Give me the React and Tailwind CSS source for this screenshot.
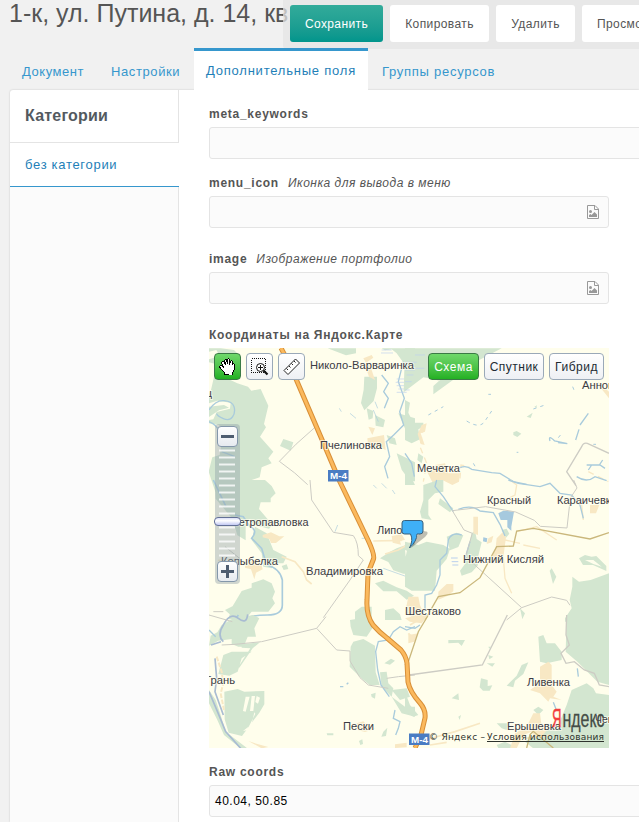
import React from 'react';

const WOOD = '#d3e6d0';
const SAND = '#f8e8c4';
const WATER = '#a9cbdc';
const BORDER = '#cdccc4';

function Label({ x, y, w, children }) {
  return (
    <text
      x={x}
      y={y}
      textLength={w}
      lengthAdjust="spacingAndGlyphs"
      fontSize="11"
      fill="#3b3b44"
      stroke="#fffff0"
      strokeWidth="2"
      strokeOpacity="0.7"
      paintOrder="stroke"
    >
      {children}
    </text>
  );
}

function RoadSign({ x, y }) {
  return (
    <g>
      <rect x={x} y={y} width="20.500" height="11.500" fill="#4a7cc3" />
      <text
        x={x + 2}
        y={y + 9.2}
        textLength="17"
        lengthAdjust="spacingAndGlyphs"
        fontSize="9.500"
        fontWeight="bold"
        fill="#fff"
      >
        М-4
      </text>
    </g>
  );
}

/* Tiles are drawn at triple density, each group covering one map sector. */
function MapCanvas() {
  return (
    <svg
      className="block h-[400px] w-[400px]"
      viewBox="209 348 400 400"
      fontFamily="'Liberation Sans', Arial, sans-serif"
    >
      <rect x="209" y="348" width="400" height="400" fill="#fffeec" />

      {/* north-west */}
      <g transform="translate(205 345) scale(.33333)">
        <path fill={WOOD} d="M12 10h35l40 5 20 20-45 12-30 10-20-5zM35 60l30 40 32 15 32 10 10 12 28-5 23 50-13 55 6 10-18 28 40 45-15 20 10 15-30 12-6 30-35 12-10 31-25 0-8-15-10 15-45 0-20-60 15-60-28-50-5-95 25-40z" />
        <path fill="#fffeec" d="M12 20l22-5 10 18-32 10zM12 235l30 5 12 30-10 60-32 10zM12 175l25-8 40 6-2 18-40 10-10 22-13 2z" />
        <path fill={WOOD} d="M12 185l45-5 15 8-30 8-30 20zM235 282l30 10-8 25-32-14zM368 10l85 0 0 15-30 6-20-8zM478 95l38 0 0 35-10 38-28 28-10-22 8-40zM485 190l20 8-2 22-12 4zM510 210l30 15-5 22-23-5zM580 205l50 15v45l-28-10zM545 270l25 10 5 20-22-5zM530 10l100 0 0 60-30-10-25-35-15-12-20 3zM575 325l25 12 30 15v57h-15l-25-35z" />
        <path fill={SAND} d="M475 40l25-10 5 8-22 15zM480 60l15 0 15 45-18-10zM487 280l50-10 5 45-20-10-32 5zM490 245l20 5-8 20z" />
        <path fill="none" stroke={WATER} strokeWidth="4" d="M12 195q20-30 45-28t30 18-4 30-28 6-20-15M12 230q25 10 30 30M530 90l20 25-14 25 14 20-12 30M595 50l-15 60 18 50-14 40 12 40-30 30-22 20 10 45-15 30 10 35M50 320l40 15" />
        <path fill="none" stroke="#bcd0ee" strokeWidth="2" d="M575 102h34M572 112h34M575 122h34M580 132h26M575 142h30M530 15h30M528 24h36M600 22h30" />
        <path fill="none" stroke={BORDER} strokeWidth="3" d="M330 247q-60 50-107 102q50 35 85 70" />
        <path fill="none" stroke={WATER} strokeWidth="2" d="M403 190l6 10M510 170l8 20M505 195l15 35M435 205l18 15" />
      </g>

      {/* north-east */}
      <g transform="translate(405 345) scale(.33333)">
        <path fill={WOOD} d="M0 10h290l-80 42-65 52-60 44 0-25 20-18-50-8-59 45zM0 165l15 8-5 30 15 30h30l0 12-15 8 5 30-25 12-20-10zM325 262l10-4 14 8-12 10-12-6zM388 185l8-4-2 8zM365 215l18-12-6 16zM40 325l15 10-5 20-13-10zM0 380l20 20 10 20H0z" />
        <path fill="#f0f1df" d="M130 45l35-20 25 35-30 10zM85 100l45-30 10 18-40 20z" />
        <path fill={SAND} d="M578 110l34 30v20l-24-30zM50 240l15-5-5 25-13 5 12 35-12-3-9-30zM90 360l30-5 10 30 35 0-3 25-20 10-30-15-28 10-18-35 24-10z" />
        <path fill="none" stroke={SAND} strokeWidth="4" strokeDasharray="18 14" d="M55 245l-10 60 20 50-10 55M165 400l3-40 25 5M550 380l60 30" />
        <path fill="none" stroke={WATER} strokeWidth="4" d="M0 325l20 30 8 40M165 368q20-8 35 5l60 10 25 2 40 25 40 8M435 288q-6-20 14 0l38 8-28-3M512 285l10-32M525 240l25-35M545 360h40l15 10M560 360l-10 15M583 360l10-15M515 395q30 20 55 0l35 12" />
        <path fill="none" stroke={WATER} strokeWidth="3" strokeDasharray="10 12" d="M70 210l45-25M185 228q40 25 55 0l20-30M205 355l7 12M385 192l35-12M335 322h5M565 298h8M503 125l8 20M460 278l8-10M250 148h8" />
        <path fill={WOOD} d="M30 40l25-12 10 25-15 20-30-15z" />
        <path fill="none" stroke="#bcd0ee" strokeWidth="2" d="M0 75h30M5 90h20M0 52h35M0 62h28M0 110h20M0 135h14M30 30h30M28 70h30" />
        <path fill="none" stroke={BORDER} strokeWidth="4" d="M612 325l-65-30q-12-3-17 10l-45 75 28 42" />
      </g>

      {/* west */}
      <g transform="translate(205 480) scale(.33333)">
        <path fill={WOOD} d="M30 0h95l55 0 20 18 12 22-15 15 0 12-30 0-5 20 30 35 20 2-20 22-40-10-20-15-10 20 0 40-25-15-15-50-50-60zM150 140l35 20 20 50 40 20-10 20-25 0-10 15-25-5-5-40-30-40zM230 258l15-5 5 14-14 3zM140 310l35-12 25 12 10 25-8 20 8 15-20 25-50 0-20 25-50-2 10-35 30-50 30-10zM60 390l30-15 10 15-20 18zM525 235l30-20 20-10 55-20v98l-35-2-30-10-15-25zM510 310l25-8 40 20 30 10 22 15-22 12-30-25-40 0zM450 395l20-15 30 0 0 40-50 0zM540 390l25-5 20 18 5 17-50 0z" />
        <path fill={SAND} d="M173 165l25-8 25 12 15 0-25 20-15 0-5-12-20-5zM120 248l45-10 8 30-20 10-5 20-10-30-18-5zM560 168l30-5 10 16-15 5 3 10-25-6z" />
        <path fill="none" stroke={SAND} strokeWidth="5" d="M230 230l40 15 25 30 10 25 15 12M505 183l85-2M540 222l40-12 35-20M40 240l20 10" />
        <path fill="none" stroke={WATER} strokeWidth="5" d="M25 0l38 80M90 105l25 5 20 30q25 10 5 35l30 30 15 50q40 10 47 45v75q0 30-45 30t-60 10l-40 10-20 25M90 420l10-15" />
        <path fill="none" stroke={WATER} strokeWidth="2" d="M505 15l10 10M530 10l15 15M562 30l8 12M390 155l8-20M470 175h12M535 265l70 25 25 35" />
        <path fill="none" stroke={BORDER} strokeWidth="3" d="M315 0l5 60 65 97 60 10q15 20 15 60l15 13-40 60-80 113M60 200l50 40M25 395h30" />
      </g>

      {/* east */}
      <g transform="translate(405 480) scale(.33333)">
        <path fill={WOOD} d="M55 15l45-15 15 0 0 35-25 5-20 20 0 45 10 15-30-5-5-20 10-35zM105 55l40 30-10 12-35-25zM0 185l40 10 25-10 50 10 20 12-10 30-30 35-5 60-25 0-45 0-20-12zM125 170l30-12 20 8-15 35-25 10zM190 200l10-40 10-8 5 25 15 10-10 40-2 30-18 20-30 10-5-15 15-20zM35 130l12-5-6 14zM290 150l15-4 8 15-10 12zM522 235l18-10 20 5 14-2 30 30 0 15-40-18-30 0zM440 265l14 25-10 22-10-40zM612 280l-55 20-35 5-20-15 0 30-8 40 6 25-20 30 0 10h132zM345 385l15 15-8 18z" />
        <path fill="#fffeec" d="M540 240l25 0 25 20-25-8zM0 210l6 2-4 18z" />
        <path fill={SAND} d="M205 110l14 0 0 55-14-5zM275 175l18-18 10 15-8 60-18 20-15-20 10-30zM250 175l15-8-5 20-15 5zM555 75l28 0-10 25-18 0zM100 335l25-23 20 0 0 22-20 15-25 10zM10 350l30 0 5 25 15 35-40 0-20-10z" />
        <path fill="none" stroke={SAND} strokeWidth="4" d="M295 235l5 60 20 45M315 0l20 15-5 30-20 10M335 155l60-15 60 40M300 180l45 10M355 195l50 10M530 75l5 45" />
        <path fill="none" stroke={WATER} strokeWidth="4" d="M95 0l-5 20 25 30 30 45M160 88q40-15 65 5l40 5 20 35 15 35M310 0l30 10 65 10 30-10 30 30 35 5 25 30 10 40M170 165q-30-10-40 15l-5 40-20 20 0 45-10 30-15 25-20 5 0 45-20 20M195 185l-12 40" />
        <path fill="#a6c9de" d="M280 100l15-8 32 3-8 45 0 12-12-10 0-22-20 0zM235 172l12 3-2 12-11-3z" />
        <path fill="none" stroke="#b9cfed" strokeWidth="3" d="M138 234h20M140 245h20M142 255h18" />
        <path fill="none" stroke={BORDER} strokeWidth="3" d="M142 92l100-12 90 16 56 25 18 18 80 5 10-90 20-30-10-24M142 92l35 58 25 10-20 70 168 153 90-32 45 10 10 15M350 383l-45 37" />
        <path fill="none" stroke="#cab77b" strokeWidth="4" d="M60 420l40-70 65-12 60-45 50-93 50-2 10-45 50-8 170 32 57-19" />
      </g>

      {/* south-west */}
      <g transform="translate(205 615) scale(.33333)">
        <path fill={WOOD} d="M50 30l35-20 60-10 18 10-15 30 5 25-25 0-12 30-16 0-20-8 0-15-40 5-28 15 5-30 20-10zM55 120l25-10 40 0 20 0-30 20-12 40-25 12-33-5zM110 88l55-6-22 18-40 58-3-2 36-56-26-2zM58 230l40-8 20 8 60-2v40l-15 25-30 40-22 30-40-10-12-40zM12 225l20 30 15 45 15 50 65 50-20 0-50-40-20-45-25-50zM435 15l60-10 10 30-20 30-40-5-8-25zM445 80l30-8 35 20 2 80 12 38-30 0-25-20-35-35 3-60zM525 172l20-2 5 35 15 15-5 25-30-30zM538 145l20-14 12 6-15 12zM498 238l14-5-2 18-10-5zM560 225l45-5 10 25-30 10zM560 245l40 30 30 0v30l-40-10zM365 355h20v6h-18zM535 350l12-12-4 25-14 2zM462 378l10-5 2 14-8 3z" />
        <path fill="#fffeec" d="M122 245l12 0-12 45-8-2zM140 243l10 0-5 45-10 0zM155 243l10 5-6 18-8-5zM148 292l3 4-25 50-12 2 26-20z" />
        <path fill={SAND} d="M455 325l20-6 10 10 25 12-30 10-20-5zM570 388l35-5 0 14-35 2zM130 378l30 10 30 8-20 4z" />
        <path fill="none" stroke={SAND} strokeWidth="6" strokeDasharray="14 5" d="M35 125l15 45 5 35-8 30 10 50M610 55l20 20" />
        <path fill="none" stroke="#a9bcd2" strokeWidth="5" d="M55 80q-20-20 0-50q20-40 45-20t28-12M12 230q30 70 50 120l45 50M30 130l5 60-5 40 25 70M18 90l30-10" />
        <path fill="none" stroke={WATER} strokeWidth="4" d="M630 35l-25 10-20-10-20 15-15 25-30 5-8 30 6 55 10 45 25 35M570 285l-5 25 20 10-5 20-8 20M405 215h10M425 208l5-5M12 45l20 20" />
        <path fill="none" stroke={BORDER} strokeWidth="3" d="M12 0l70 20M50 90l40-2 80-8 165-40 28-35M335 40l60 65 40 3 0 30 30 50 25 22 60 10M545 190l35-5 50-5" />
      </g>

      {/* south-east */}
      <g transform="translate(405 615) scale(.33333)">
        <path fill={WOOD} d="M485 0h127v210l-35-10-60-60-35-30zM400 65l15-5 10 25 25 0 20 25 0 25-45 10-20-5zM130 75l50 0-10 18-10-10-30 2zM350 150l20-8-15 35-25 20-5 20-20-5 30-30zM250 95h8l-5 6zM245 145l25 0-8 10zM250 120l15 5-12 8zM228 190l20 5 0 18 14-2-8 16-20 0-10-10zM140 250l20-15 2 20zM160 305l8-5-4 15zM500 225l45-20 20 15 8 15 39 5v160h-162l-65 0-25-20 40-30 60-20 25-60zM385 285l15-10 15 10-15 15zM0 230l15 40 25 30-15 5-25-15zM275 325l35 0-5 20-15-5zM275 390l25-10 20 10v9h-40z" />
        <path fill={SAND} d="M0 10l40-10h30l-20 25-35-5zM10 60l30-5-12 25-18 5zM405 155l25-15 10 10 0 60 15 20-10 15 25 10-35-5-5 10-25-25-30-10 30-20zM385 295l20 0 5 40 20 5-20 25-20 0-10-15-25 10-20 40h-20l15-45 35-20z" />
        <path fill="none" stroke={SAND} strokeWidth="5" d="M60 375l90-25 75-25M15 30l50-30M75 390l50-8M360 370l80-10" />
        <path fill="none" stroke={WATER} strokeWidth="4" d="M0 35l30 5 15-10M445 262l10 25M517 160l3 25" />
        <path fill="none" stroke="#cab77b" strokeWidth="4" d="M70 0l-30 50-30 90-10 10M365 399l10-40 10-10 60 50" />
        <path fill="none" stroke={BORDER} strokeWidth="4" d="M12 180l220-30 75-150M485 0l-2 60 10 30-25 25 15 30 25-5 30 25 30 10 15 35 30 5" />
      </g>

      {/* M-4 motorway */}
      <path
        fill="none"
        stroke="#d88f37"
        strokeWidth="5"
        strokeLinejoin="round"
        d="M281 348L290 365 323 442 340 482 368 540Q375 555 373.500 559L368 573 367 600Q366 615 373 625 380 633 387 638L401 650Q406 656 407 663L408 682Q410 692 420 703 426 710 425 718L421 735 415 748"
      />
      <path
        fill="none"
        stroke="#fbb95d"
        strokeWidth="3"
        strokeLinejoin="round"
        d="M281 348L290 365 323 442 340 482 368 540Q375 555 373.500 559L368 573 367 600Q366 615 373 625 380 633 387 638L401 650Q406 656 407 663L408 682Q410 692 420 703 426 710 425 718L421 735 415 748"
      />

      <RoadSign x={328} y={470} />
      <RoadSign x={409} y={733.5} />

      <Label x={310} y={369} w={104}>Николо-Варваринка</Label>
      <Label x={582} y={389} w={32}>Аннов</Label>
      <Label x={206} y={397} w={6}>ц</Label>
      <Label x={320} y={449} w={62}>Пчелиновка</Label>
      <Label x={417} y={472} w={43}>Мечетка</Label>
      <Label x={487} y={504} w={44}>Красный</Label>
      <Label x={557} y={504} w={60}>Караичевка</Label>
      <Label x={231} y={526} w={77.5}>Петропавловка</Label>
      <Label x={377} y={534} w={36}>Липовк</Label>
      <Label x={463} y={563} w={81}>Нижний Кисляй</Label>
      <Label x={221} y={565} w={57}>Копыбелка</Label>
      <Label x={306} y={575} w={77}>Владимировка</Label>
      <Label x={405} y={615} w={56}>Шестаково</Label>
      <Label x={205} y={684} w={30}>Грань</Label>
      <Label x={527} y={686} w={43}>Ливенка</Label>
      <Label x={343} y={730} w={31}>Пески</Label>
      <Label x={507} y={730} w={54}>Ерышевка</Label>
      <Label x={595} y={723} w={30}>Чепра</Label>

      {/* placemark */}
      <path d="M411 548l14-11q6-6-2-6l-5 4z" fill="#000" opacity=".25" />
      <path
        d="M404.500 520.500h16q2.500 0 2.500 2.500v8q0 3-3 3h-3q0 7-7.500 14 4-8 1-14h-6q-2.500 0-2.500-2.500v-8.500q0-2.500 2.500-2.500z"
        fill="#3fb0f7"
        stroke="#3b5f78"
      />

      {/* logo and copyright */}
      <text x="552" y="727" fontSize="26" textLength="9.500" lengthAdjust="spacingAndGlyphs" fill="#f43d3d" stroke="#f43d3d" strokeWidth=".5">Я</text>
      <text x="562.500" y="727" fontSize="24" textLength="42" lengthAdjust="spacingAndGlyphs" fill="#454d46" stroke="#454d46" strokeWidth=".3">ндекс</text>
      <g fontFamily="'DejaVu Sans', sans-serif" fontSize="9" fill="#2e332d">
        <text x="429" y="740" textLength="56">© Яндекс –</text>
        <text x="487" y="740" textLength="117">Условия использования</text>
        <path d="M487 741.500h117" stroke="#2e332d" />
      </g>
    </svg>
  );
}

const mapButton =
  'flex h-[27px] items-center justify-center rounded-[4px] border border-[#9aa9b8] bg-linear-to-b from-white to-[#eef0f4] text-[12px] text-[#222b33]';
const mapButtonActive =
  'flex h-[27px] items-center justify-center rounded-[4px] border border-[#3a7a45] bg-linear-to-b from-[#6fd86b] to-[#22b122] text-[12px] text-white';

function HandIcon() {
  return (
    <svg width="17" height="17" viewBox="0 0 17 17" shapeRendering="crispEdges">
      <path
        d="M5.500 16.500v-2l-4-4-1-2 1-1h1l2 2-2-5 1-1h1l2 3-1-4 1-1h1l1 4 0-4 1-1 1 1 0 5 1-3 1-1 1 1v3l1-1 1 1v5l-2 3v3z"
        fill="#fff"
        stroke="#000"
      />
    </svg>
  );
}

function AreaZoomIcon() {
  return (
    <svg width="18" height="18" viewBox="0 0 18 18" fill="none" stroke="#111">
      <path d="M.5.500h14v14H.5z" strokeDasharray="1 1" shapeRendering="crispEdges" />
      <circle cx="9.500" cy="9.500" r="4" fill="#fff" />
      <path d="M9.500 7v5M7 9.500h5" shapeRendering="crispEdges" />
      <path d="M12.500 12.500l4 4" strokeWidth="2.200" />
    </svg>
  );
}

function RulerIcon() {
  return (
    <svg width="18" height="18" viewBox="0 0 18 18" fill="#fff" stroke="#222">
      <path d="M1 12.500L12.500 1l4 4L5 16.500z" />
      <path d="M3.500 10.500l1.500 1.500M6 8l1.500 1.500M8.500 5.500L10 7M11 3l1.500 1.500" />
    </svg>
  );
}

function ZoomSlider() {
  const ticks = Array.from({ length: 16 }, (_, i) => 27 + i * 7);
  return (
    <svg width="28" height="162" viewBox="0 0 28 162" className="absolute top-[75px] left-[4px]">
      <defs>
        <linearGradient id="knob" x2="0" y2="1">
          <stop offset="0" stopColor="#fff" />
          <stop offset="1" stopColor="#e6eaef" />
        </linearGradient>
        <linearGradient id="thumb" x2="0" y2="1">
          <stop offset="0" stopColor="#d5d9f7" />
          <stop offset=".4" stopColor="#fff" />
          <stop offset="1" stopColor="#bcc3f2" />
        </linearGradient>
      </defs>
      <rect x="2" y="1" width="25" height="160" rx="4" fill="#8fa0a8" opacity=".42" />
      {ticks.map((y) => (
        <path key={y} d={`M6 ${y + 0.5}h16`} stroke="#fff" strokeWidth="2" opacity=".8" />
      ))}
      <rect x="4.500" y="3.500" width="20" height="20" rx="3.500" fill="url(#knob)" stroke="#8497aa" />
      <path d="M8 13.500h13" stroke="#4e5d70" strokeWidth="3" />
      <rect x="4.500" y="138.500" width="20" height="20" rx="3.500" fill="url(#knob)" stroke="#8497aa" />
      <path d="M8 148.500h13M14.500 142v13" stroke="#4e5d70" strokeWidth="3" />
      <rect x="1.500" y="94.500" width="26" height="8" rx="3.500" fill="url(#thumb)" stroke="#637097" />
    </svg>
  );
}

function MapField() {
  return (
    <div className="relative h-[400px] w-[400px] overflow-hidden">
      <MapCanvas />
      <div className="absolute top-[5px] left-[5px] flex gap-[5px]">
        <div className={`${mapButtonActive} w-[27px]`}><HandIcon /></div>
        <div className={`${mapButton} w-[27px]`}><AreaZoomIcon /></div>
        <div className={`${mapButton} w-[27px]`}><RulerIcon /></div>
      </div>
      <div className="absolute top-[5px] right-[5px] flex gap-[5px] tracking-[0.5px]">
        <div className={`${mapButtonActive} w-[51px]`}>Схема</div>
        <div className={`${mapButton} w-[60px]`}>Спутник</div>
        <div className={`${mapButton} w-[55px]`}>Гибрид</div>
      </div>
      <ZoomSlider />
    </div>
  );
}

function ImageFileIcon() {
  return (
    <svg width="12" height="14" viewBox="0 0 12 14">
      <path d="M.5.500h7.500l3.500 3.500v9.500H.5z" fill="none" stroke="#999" />
      <path d="M7.500.500v4h4" fill="none" stroke="#999" />
      <circle cx="3.500" cy="6.500" r="1.500" fill="#999" />
      <path d="M2 12V10l1.500-1 1 1 3-3L10 9.500V12z" fill="#999" />
    </svg>
  );
}

function FieldLabel({ name, hint }) {
  return (
    <div className="flex h-[18px] items-center whitespace-nowrap text-[12px] leading-[18px] text-[#555]">
      <span className="font-bold tracking-[0.73px]">{name}</span>
      {hint && <span className="ml-[9px] tracking-[0.5px] italic">{hint}</span>}
    </div>
  );
}

const fieldBox =
  'flex h-[32px] items-center rounded-[3px] border border-[#e4e4e4] bg-[#fbfbfb] text-[12px]';

export default function App() {
  return (
    <div className="relative h-[822px] w-[639px] overflow-hidden bg-[#f1f1f1] font-['Liberation_Sans',Arial,sans-serif] text-[13px]">
      <h1 className="h-[48px] pl-[9px] text-[25px] leading-[27px] whitespace-nowrap text-[#555]">
        1-к, ул. Путина, д. 14, кв
      </h1>

      <div className="absolute top-0 left-[283px] flex h-[49px] w-[370px] gap-[7px] rounded-bl-[4px] bg-[#e4e4e4]/75 pt-[5px] pl-[7px] text-[12px] tracking-[0.4px] text-[#555]">
        <div className="flex h-[37px] w-[93px] shrink-0 items-center justify-center rounded-[3px] bg-linear-to-b from-[#32ab9a] to-[#00958c] text-white">
          Сохранить
        </div>
        <div className="flex h-[37px] w-[99px] shrink-0 items-center justify-center rounded-[3px] bg-white">Копировать</div>
        <div className="flex h-[37px] w-[79px] shrink-0 items-center justify-center rounded-[3px] bg-white">Удалить</div>
        <div className="flex h-[37px] w-[90px] shrink-0 items-center rounded-[3px] bg-white pl-[15px]">Просмотр</div>
      </div>

      <nav className="flex h-[42px] pl-[10px] whitespace-nowrap text-[#3697cd]">
        <span className="w-[89px] pt-[14px] pl-[12px] tracking-[0.55px]">Документ</span>
        <span className="w-[95px] pt-[14px] pl-[12px] tracking-[0.6px]">Настройки</span>
        <span className="relative z-10 w-[174px] border-t-[3px] border-[#3697cd] bg-white pt-[10px] pl-[12px] tracking-[0.78px] text-[#1f7fb8]">
          Дополнительные поля
        </span>
        <span className="pt-[14px] pl-[14px] tracking-[0.73px]">Группы ресурсов</span>
      </nav>

      <div className="ml-[10px] flex h-[732px] rounded-tl-[3px] bg-white shadow-[0_0_2px_rgba(0,0,0,0.2)]">
        <aside className="w-[169px] shrink-0">
          <h2 className="h-[53px] border-r border-b border-[#e4e4e4] pl-[15px] text-[16px] leading-[51px] font-bold tracking-[0.2px] text-[#53595f]">
            Категории
          </h2>
          <div className="h-[44px] border-b border-[#3697cd] pl-[15px] leading-[43px] tracking-[0.7px] text-[#1f7fb8]">
            без категории
          </div>
          <div className="h-[635px] border-r border-[#e4e4e4] bg-[#fbfbfb]" />
        </aside>

        <main className="flex w-[460px] flex-col overflow-hidden pt-[15px] pl-[30px]">
          <FieldLabel name="meta_keywords" />
          <div className={`${fieldBox} mt-[4px] w-[500px]`} />

          <div className="mt-[15px]"><FieldLabel name="menu_icon" hint="Иконка для вывода в меню" /></div>
          <div className={`${fieldBox} mt-[4px] w-[400px] justify-end pr-[9px]`}><ImageFileIcon /></div>

          <div className="mt-[22px]"><FieldLabel name="image" hint="Изображение портфолио" /></div>
          <div className={`${fieldBox} mt-[4px] w-[400px] justify-end pr-[9px]`}><ImageFileIcon /></div>

          <div className="mt-[22px]"><FieldLabel name="Координаты на Яндокс.Карте" /></div>
          <div className="mt-[4px]"><MapField /></div>

          <div className="mt-[15px]"><FieldLabel name="Raw coords" /></div>
          <div className={`${fieldBox} mt-[4px] w-[500px] pl-[5px] tracking-[0.5px] text-black`}>40.04, 50.85</div>
        </main>
      </div>
    </div>
  );
}
